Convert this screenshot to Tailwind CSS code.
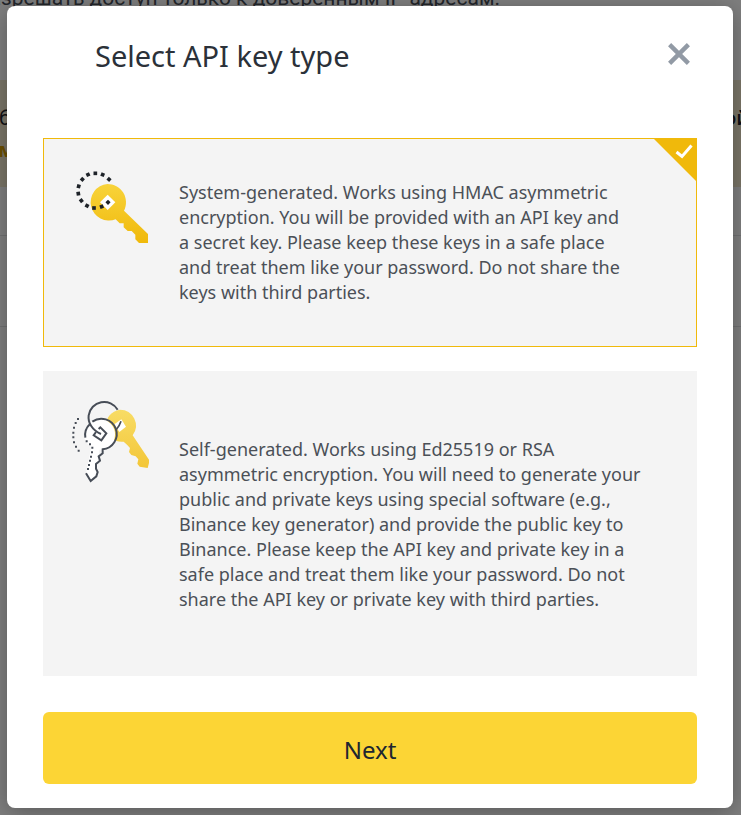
<!DOCTYPE html>
<html lang="en">
<head>
<meta charset="utf-8">
<meta name="viewport" content="width=device-width, initial-scale=1">
<title>Select API key type</title>
<script src="https://cdn.jsdelivr.net/npm/@tailwindcss/browser@4"></script>
</head>
<body class="relative min-h-screen overflow-x-hidden bg-white font-['Noto_Sans',sans-serif] text-[#1e2329]">

<!-- Page behind the dialog -->
<div class="absolute inset-0 overflow-hidden" lang="ru" aria-hidden="true">
  <p class="absolute -top-4 left-0 flex w-[500px] justify-end whitespace-nowrap text-[21px] leading-7 font-['Roboto','Noto_Sans',sans-serif] text-[#474d57]">азрешать доступ только к доверенным IP-адресам.</p>
  <div class="absolute inset-x-0 top-20 h-[107px] bg-[#f6ecd0] text-[20px] leading-8">
    <div class="flex justify-between pt-[22px]"><span class="-ml-px">б</span><span class="-mr-2 font-medium">ой</span></div>
    <div class="-ml-0.5 font-bold text-[#d89f00]">м</div>
  </div>
  <div class="absolute inset-x-0 top-[235px] h-[92px] border-y border-[#e0e2e5]"></div>
</div>
<div class="absolute inset-0 bg-black/50"></div>

<div class="relative pt-[6px] pr-2 pb-[7px] pl-[7px]">
  <form role="dialog" aria-labelledby="title" class="rounded-lg bg-white px-9 pb-6 shadow-[0_4px_24px_rgba(0,0,0,0.3)]">
    <header class="flex h-[132px] items-start justify-between pt-[30px]">
      <h1 id="title" class="pl-[52px] text-[29px] leading-10 text-[#2b3139]">Select API key type</h1>
      <button type="button" aria-label="Close" class="mt-[6px] mr-[6px] text-[#929aa5]">
        <svg class="size-6" viewBox="0 0 24 24" fill="none" stroke="currentColor" stroke-width="4.4"><path d="M2.6 2.6 21.4 21.4M21.4 2.6 2.6 21.4"/></svg>
      </button>
    </header>

    <div class="flex flex-col gap-6">
      <label class="relative flex min-h-[209px] items-center border border-[#f0b90b] bg-[#f4f4f4] pr-17 pl-4">
        <input type="radio" name="key-type" value="system" checked class="sr-only">
        <svg class="mt-[21px] h-[95px] w-[110px] shrink-0 self-start" viewBox="0 0 330 285" aria-hidden="true">
          <defs><linearGradient id="gold" x1="0" y1="0" x2="0" y2="1"><stop stop-color="#f8d33a"/><stop offset="1" stop-color="#f0b90b"/></linearGradient></defs>
          <path fill="url(#gold)" d="M142 72a55 55 0 0 1 50 80L264 222V249H237L226 238V224L215 213H203L191 202V190H179L167 178A55 55 0 1 1 142 72Z"/>
          <path fill="#fff" d="m143 104 23 23-23 23-23-23z"/>
          <g fill="#1e2329">
            <path d="M-5.5-5.5h11v11h-11z" transform="translate(106 40)"/>
            <path d="M-5.5-5.5h11v11h-11z" transform="translate(128 44) rotate(22)"/>
            <path d="M-5.5-5.5h11v11h-11z" transform="translate(147 58) rotate(42)"/>
            <path d="M-5.5-5.5h11v11h-11z" transform="translate(84 44) rotate(-25)"/>
            <path d="M-5.5-5.5h11v11h-11z" transform="translate(67 58) rotate(-48)"/>
            <path d="M-5.5-5.5h11v11h-11z" transform="translate(56 79) rotate(-75)"/>
            <path d="M-5.5-5.5h11v11h-11z" transform="translate(55 101) rotate(-8)"/>
            <path d="M-5.5-5.5h11v11h-11z" transform="translate(64 122) rotate(-38)"/>
            <path d="M-5.5-5.5h11v11h-11z" transform="translate(81 137) rotate(28)"/>
            <path d="M-5.5-5.5h11v11h-11z" transform="translate(102 144)"/>
            <path d="M-5.5-5.5h11v11h-11z" transform="translate(125 140) rotate(-20)"/>
            <path d="M-5.5-5.5h11v11h-11z" transform="translate(144 127) rotate(45)"/>
          </g>
        </svg>
        <span class="ml-[9px] text-[18px] leading-[25px] text-[#4b5057]">System-generated. Works using HMAC asymmetric encryption. You will be provided with an API key and a secret key. Please keep these keys in a safe place and treat them like your password. Do not share the keys with third parties.</span>
        <svg class="absolute top-0 right-0 h-[42px] w-[42px]" viewBox="0 0 42 42" aria-hidden="true"><path fill="#f0b90b" d="M0 0H42V42z"/><path d="m22.5 13 5.5 4.5L37.500 6.500" fill="none" stroke="#fff" stroke-width="3"/></svg>
      </label>

      <label class="relative flex min-h-[305px] items-center border border-transparent bg-[#f4f4f4] pr-11 pl-4">
        <input type="radio" name="key-type" value="self" class="sr-only">
        <svg class="mt-[21px] h-[97px] w-[110px] shrink-0 self-start" viewBox="0 9 330 291" aria-hidden="true">
          <defs><linearGradient id="pale" x1="0" y1="0" x2="0" y2="1"><stop stop-color="#f8dc65"/><stop offset="1" stop-color="#f3c637"/></linearGradient></defs>
          <path fill="url(#pale)" d="M180 59a48 48 0 0 1 38 77L267 209V219L263 234L239 230L232 221L235 208L227 199L214 195L207 186L210 174L201 164L191 155A48 48 0 1 1 180 59Z"/>
          <path fill="#fff" d="M184 88 198 110 178 126 163 103z"/>
          <path d="M183 94C180 104 175 112 168 120" fill="none" stroke="#474d57" stroke-width="5"/>
          <path fill="#fff" d="M120 87a46 46 0 1 1-2 92L109 259 92 273 78 250 94 172A46 46 0 0 1 120 87Z"/>
          <g fill="none" stroke="#474d57" stroke-width="6">
            <path d="M173 59A47 47 0 0 0 86 76C83 98 97 121 123 132"/>
            <path d="M97 95A46 46 0 1 1 128 178V190L116 199L120 212L108 222V236L113 246L109 259L92 273L78 250"/>
            <path d="M76 143A46 46 0 0 1 90 102"/>
            <path d="M116 117 121 112 139 130 124 151 101 136 108 126"/>
          </g>
          <g fill="#474d57">
            <path d="M51 84h6v6h-6zM44 96h6v6h-6zM39 110h6v6h-6zM37 125h6v6h-6zM37 139h6v6h-6zM39 154h6v6h-6zM45 167h6v6h-6zM53 179h6v6h-6z"/>
            <path d="M77 151h6v6h-6zM87 160h6v6h-6zM94 170h6v6h-6zM93 184h6v6h-6zM90 197h6v6h-6zM87 209h6v6h-6zM84 222h6v6h-6zM81 234h6v6h-6z"/>
          </g>
        </svg>
        <span class="ml-[9px] pt-0.5 text-[18px] leading-[25px] text-[#4b5057]">Self-generated. Works using Ed25519 or RSA asymmetric encryption. You will need to generate your public and private keys using special software (e.g., Binance key generator) and provide the public key to Binance. Please keep the API key and private key in a safe place and treat them like your password. Do not share the API key or private key with third parties.</span>
      </label>
    </div>

    <button type="submit" class="mt-9 h-[72px] w-full rounded-md bg-[#fcd535] pt-1 text-[24px] leading-8 text-[#202630]">Next</button>
  </form>
</div>
</body>
</html>
